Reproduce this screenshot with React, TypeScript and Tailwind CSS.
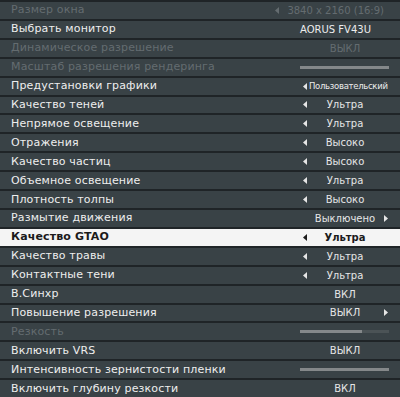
import React from "react";

const LeftArrow = ({ dark }: { dark?: boolean }) => (
  <svg width="4" height="7" viewBox="0 0 4 7" className="shrink-0">
    <polygon points="4,0 4,7 0,3.5" fill={dark ? "#1c1c1c" : "#e6e6e6"} />
  </svg>
);
const RightArrow = () => (
  <svg width="4" height="7" viewBox="0 0 4 7" className="shrink-0">
    <polygon points="0,0 0,7 4,3.5" fill="#e6e6e6" />
  </svg>
);

type RowProps = {
  label: string;
  disabled?: boolean;
  highlight?: boolean;
  children?: React.ReactNode;
};

const Row = ({ label, disabled, highlight, children }: RowProps) => (
  <div
    className={
      "flex-1 flex items-center min-h-0 " +
      (highlight ? "bg-[#f4f4f4]" : "bg-[#394246]")
    }
  >
    <div
      className={
        "flex-1 pl-[11px] text-[11px] leading-[14px] whitespace-nowrap tracking-[0.15px] " +
        (highlight
          ? "text-[#1b1b1b] font-semibold"
          : disabled
          ? "text-[#646c70]"
          : "text-[#eeeeee]")
      }
    >
      {label}
    </div>
    {children}
  </div>
);

const Choice = ({
  value,
  left,
  right,
  highlight,
  disabled,
}: {
  value: string;
  left?: boolean;
  right?: boolean;
  highlight?: boolean;
  disabled?: boolean;
}) => (
  <div className="w-[90px] shrink-0 mr-[10px] grid grid-cols-[10px_1fr_10px] items-center text-[10px] leading-[13px]">
    <div className="flex justify-start pl-[3px]">{left && <LeftArrow dark={highlight} />}</div>
    <div
      className={
        "text-center whitespace-nowrap " +
        (highlight
          ? "text-[#1b1b1b] font-bold"
          : disabled
          ? "text-[#646c70]"
          : "text-[#e6e6e6]")
      }
    >
      {value}
    </div>
    <div className="flex justify-end pr-[2px]">{right && <RightArrow />}</div>
  </div>
);

const Slider = ({ fill }: { fill?: number }) => (
  <div className="w-[89px] shrink-0 mr-[11px] h-[3px] bg-[#4b5356] flex">
    <div
      className="h-full bg-[#84888a]"
      style={{ width: fill === undefined ? "100%" : `${fill}%` }}
    />
  </div>
);

export default function App() {
  return (
    <div
      className="w-[400px] h-[397px] bg-[#1f2427] flex flex-col gap-[2px] pt-[2px] overflow-hidden"
      style={{ fontFamily: '"DejaVu Sans", "Liberation Sans", sans-serif' }}
    >
      <Row label="Размер окна" disabled>
        <div className="flex shrink-0 items-center justify-end gap-[8px] pr-[16px] text-[10px] leading-[13px] text-[#646c70] whitespace-nowrap">
          <svg width="4" height="7" viewBox="0 0 4 7">
            <polygon points="4,0 4,7 0,3.5" fill="#646c70" />
          </svg>
          <span>3840 x 2160 (16:9)</span>
        </div>
      </Row>
      <Row label="Выбрать монитор">
        <div className="w-[90px] shrink-0 mr-[10px] pr-[28px] text-center text-[10px] leading-[13px] text-[#ececec] whitespace-nowrap">
          AORUS FV43U
        </div>
      </Row>
      <Row label="Динамическое разрешение" disabled>
        <Choice value="ВЫКЛ" disabled />
      </Row>
      <Row label="Масштаб разрешения рендеринга" disabled>
        <Slider />
      </Row>
      <Row label="Предустановки графики">
        <div className="w-[90px] shrink-0 mr-[10px] flex items-center gap-[2px] pl-[3px] text-[8.5px] leading-[13px] text-[#ececec] whitespace-nowrap tracking-[-0.3px]">
          <LeftArrow />
          <span>Пользовательский</span>
        </div>
      </Row>
      <Row label="Качество теней">
        <Choice value="Ультра" left />
      </Row>
      <Row label="Непрямое освещение">
        <Choice value="Ультра" left />
      </Row>
      <Row label="Отражения">
        <Choice value="Высоко" left />
      </Row>
      <Row label="Качество частиц">
        <Choice value="Высоко" left />
      </Row>
      <Row label="Объемное освещение">
        <Choice value="Ультра" left />
      </Row>
      <Row label="Плотность толпы">
        <Choice value="Высоко" left />
      </Row>
      <Row label="Размытие движения">
        <Choice value="Выключено" right />
      </Row>
      <Row label="Качество GTAO" highlight>
        <Choice value="Ультра" left highlight />
      </Row>
      <Row label="Качество травы">
        <Choice value="Ультра" left />
      </Row>
      <Row label="Контактные тени">
        <Choice value="Ультра" left />
      </Row>
      <Row label="В.Синхр">
        <Choice value="ВКЛ" />
      </Row>
      <Row label="Повышение разрешения">
        <Choice value="ВЫКЛ" right />
      </Row>
      <Row label="Резкость" disabled>
        <Slider fill={70} />
      </Row>
      <Row label="Включить VRS">
        <Choice value="ВЫКЛ" />
      </Row>
      <Row label="Интенсивность зернистости пленки">
        <Slider />
      </Row>
      <Row label="Включить глубину резкости">
        <Choice value="ВКЛ" />
      </Row>
    </div>
  );
}
